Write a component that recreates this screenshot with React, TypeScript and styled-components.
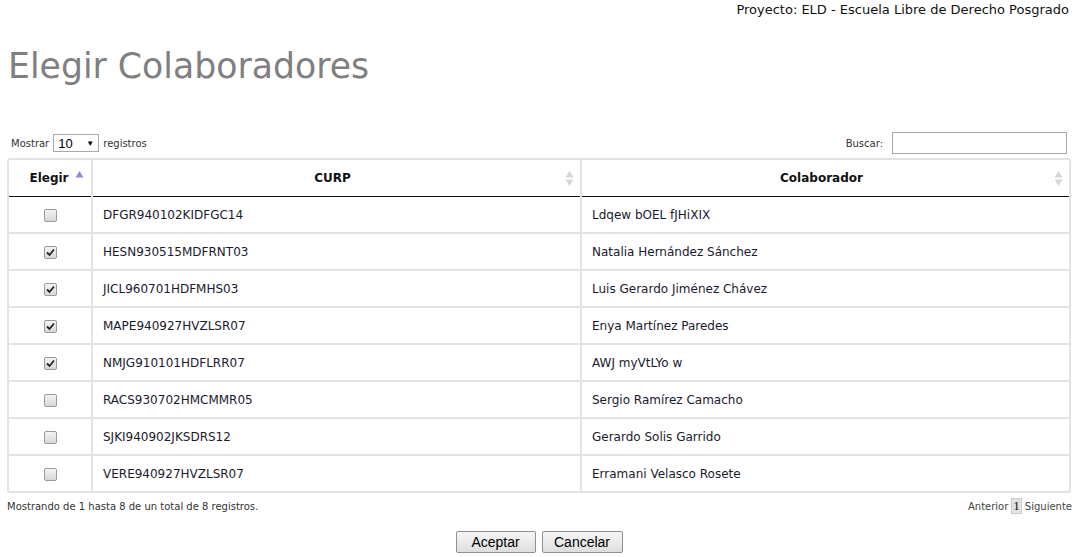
import React, { useState } from "react";
import styled, { createGlobalStyle } from "styled-components";

const Global = createGlobalStyle`
  html, body { margin: 0; padding: 0; background: #fff; }
  body { font-family: Verdana, "DejaVu Sans", sans-serif; color: #222; }
`;

const Page = styled.div`
  width: 1075px;
  box-sizing: border-box;
`;

const ProjectBar = styled.div`
  display: flex;
  justify-content: flex-end;
  padding: 2px 6px 0 0;
  font-size: 13px;
  line-height: 16px;
  color: #111;
`;

const Title = styled.h1`
  margin: 26px 0 0 8px;
  font-weight: normal;
  font-size: 34.7px;
  line-height: 44px;
  color: #808080;
`;

const Controls = styled.div`
  display: flex;
  justify-content: space-between;
  align-items: center;
  margin: 44px 8px 0 11px;
  font-size: 10px;
  color: #333;
  height: 22px;
`;

const Label = styled.label`
  display: flex;
  align-items: center;
  gap: 4px;
`;

const SelectBox = styled.div`
  display: flex;
  align-items: center;
  justify-content: space-between;
  width: 46px;
  height: 18px;
  box-sizing: border-box;
  border: 1px solid #a9a9a9;
  padding: 0 4px 0 4px;
  font-size: 13px;
  color: #000;
  font-family: "Liberation Sans", Arial, sans-serif;
  background: #fff;
`;

const Caret = styled.span`
  font-size: 8px;
`;

const SearchInput = styled.input`
  width: 175px;
  height: 22px;
  box-sizing: border-box;
  border: 1px solid #a9a9a9;
  margin-left: 5px;
`;

const TableWrap = styled.div`
  margin: 4px 4px 0 7px;
  border: 2px solid #e3e3e3;
  border-radius: 3px;
  overflow: hidden;
`;

const Table = styled.table`
  width: 100%;
  table-layout: fixed;
  border-collapse: collapse;
  font-size: 12px;
`;

const Th = styled.th`
  position: relative;
  height: 36px;
  padding: 0 18px 0 10px;
  border-left: 2px solid #e3e3e3;
  border-bottom: 1px solid #111;
  font-weight: bold;
  font-size: 12px;
  color: #111;
  text-align: center;
  &:first-child { border-left: none; padding: 0 12px 0 10px; }
`;

const SortIcon = styled.svg<{ $top?: number; $right?: number }>`
  position: absolute;
  right: ${(p) => (p.$right ?? 6)}px;
  top: ${(p) => (p.$top ?? 10)}px;
`;

const Td = styled.td<{ $center?: boolean }>`
  height: 35px;
  padding: 0 10px;
  border-left: 2px solid #e3e3e3;
  border-top: 2px solid #e3e3e3;
  text-align: ${(p) => (p.$center ? "center" : "left")};
  color: #1a1a2e;
  &:first-child { border-left: none; }
`;

const Tr = styled.tr`
  &:first-child td { border-top: none; }
`;

const Check = styled.span`
  display: inline-flex;
  align-items: center;
  justify-content: center;
  width: 11px;
  height: 11px;
  border: 1px solid #9a9a9a;
  border-radius: 2px;
  background: linear-gradient(#f4f4f4, #d8d8d8);
  vertical-align: middle;
  cursor: pointer;
`;

const Footer = styled.div`
  display: flex;
  justify-content: space-between;
  align-items: center;
  margin: 5px 3px 0 7px;
  font-size: 10px;
  color: #333;
`;

const Pager = styled.div`
  display: flex;
  align-items: center;
  gap: 3px;
  color: #444;
`;

const PageNum = styled.span`
  display: inline-block;
  padding: 0 1px;
  border: 1px solid #ccc;
  background: #e2e2e2;
  font-size: 13px;
  font-family: "Liberation Serif", serif;
  line-height: 14px;
  color: #111;
`;

const Buttons = styled.div`
  display: flex;
  justify-content: center;
  gap: 6px;
  margin-top: 17px;
  padding-left: 3px;
`;

const Button = styled.button<{ $w: number }>`
  width: ${(p) => p.$w}px;
  height: 22px;
  font-family: "Liberation Sans", Arial, sans-serif;
  font-size: 14px;
  color: #000;
  border: 1px solid #8f8f8f;
  border-radius: 2px;
  background: linear-gradient(#f6f6f6, #dedede);
  padding: 0;
`;

const rows = [
  ["DFGR940102KIDFGC14", "Ldqew bOEL fJHiXIX", false],
  ["HESN930515MDFRNT03", "Natalia Hernández Sánchez", true],
  ["JICL960701HDFMHS03", "Luis Gerardo Jiménez Chávez", true],
  ["MAPE940927HVZLSR07", "Enya Martínez Paredes", true],
  ["NMJG910101HDFLRR07", "AWJ myVtLYo w", true],
  ["RACS930702HMCMMR05", "Sergio Ramírez Camacho", false],
  ["SJKI940902JKSDRS12", "Gerardo Solis Garrido", false],
  ["VERE940927HVZLSR07", "Erramani Velasco Rosete", false],
] as const;

const Both = () => (
  <SortIcon width="9" height="17" viewBox="0 0 9 17">
    <path d="M4.5 1 L8.5 7.5 L0.5 7.5 Z" fill="#d6d6d6" />
    <path d="M4.5 16 L8.5 9.5 L0.5 9.5 Z" fill="#d6d6d6" />
  </SortIcon>
);

const Asc = () => (
  <SortIcon width="9" height="8" viewBox="0 0 9 8" $top={10} $right={7}>
    <path d="M4.5 1 L8.5 7.5 L0.5 7.5 Z" fill="#8c8ce0" />
  </SortIcon>
);

export default function App() {
  const [checked, setChecked] = useState<boolean[]>(rows.map((r) => r[2] as boolean));
  return (
    <Page>
      <Global />
      <ProjectBar>Proyecto: ELD - Escuela Libre de Derecho Posgrado</ProjectBar>
      <Title>Elegir Colaboradores</Title>
      <Controls>
        <Label>
          Mostrar
          <SelectBox>
            10 <Caret>▼</Caret>
          </SelectBox>
          registros
        </Label>
        <Label>
          Buscar:
          <SearchInput />
        </Label>
      </Controls>
      <TableWrap>
        <Table>
          <colgroup>
            <col style={{ width: 83 }} />
            <col style={{ width: 489 }} />
            <col />
          </colgroup>
          <thead>
            <tr>
              <Th>
                Elegir
                <Asc />
              </Th>
              <Th>
                CURP
                <Both />
              </Th>
              <Th>
                Colaborador
                <Both />
              </Th>
            </tr>
          </thead>
          <tbody>
            {rows.map((r, i) => (
              <Tr key={r[0]}>
                <Td $center>
                  <Check onClick={() => setChecked((c) => c.map((v, j) => (j === i ? !v : v)))}>
                    {checked[i] && (
                      <svg width="9" height="9" viewBox="0 0 9 9">
                        <path d="M1 4.5 L3.5 7 L8 1.5" stroke="#222" strokeWidth="1.8" fill="none" />
                      </svg>
                    )}
                  </Check>
                </Td>
                <Td>{r[0]}</Td>
                <Td>{r[1]}</Td>
              </Tr>
            ))}
          </tbody>
        </Table>
      </TableWrap>
      <Footer>
        <span>Mostrando de 1 hasta 8 de un total de 8 registros.</span>
        <Pager>
          <span>Anterior</span>
          <PageNum>1</PageNum>
          <span>Siguiente</span>
        </Pager>
      </Footer>
      <Buttons>
        <Button $w={80}>Aceptar</Button>
        <Button $w={81}>Cancelar</Button>
      </Buttons>
    </Page>
  );
}
